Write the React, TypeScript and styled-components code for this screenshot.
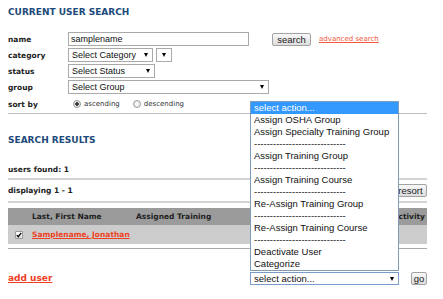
import styled, { createGlobalStyle } from 'styled-components'

const GlobalStyle = createGlobalStyle`
  html, body {
    margin: 0;
    padding: 0;
    background: #ffffff;
  }
  body {
    font-family: 'DejaVu Sans', Verdana, sans-serif;
    color: #222222;
  }
`

const Page = styled.div`
  width: 419px;
  padding: 7px 16px 0 8px;
`
const Title = styled.h2<{ $top?: number }>`
  margin: ${(p) => p.$top || 0}px 0 0 0;
  font: bold 9px/11px 'DejaVu Sans', Verdana, sans-serif;
  color: #1d4a7a;
`
const Form = styled.div`
  display: grid;
  grid-template-columns: 60px 1fr;
  grid-auto-rows: 14px;
  row-gap: 2px;
  margin-top: 14px;
  .sort {
    height: 16px;
  }
`
const Label = styled.div`
  display: flex;
  align-items: center;
  font-size: 7.5px;
  font-weight: bold;
  color: #222;
`
const Row = styled.div`
  display: flex;
  align-items: center;
  gap: 3px;
`
const TextInput = styled.div<{ $w: number }>`
  box-sizing: border-box;
  width: ${(p) => p.$w}px;
  height: 14px;
  border: 1px solid #a9a9a9;
  padding: 0 2px;
  display: flex;
  align-items: center;
  font: 9px 'Liberation Sans', Arial, sans-serif;
  color: #111;
`
const SelectBox = styled.div<{ $w: number; $focus?: boolean; $h?: number }>`
  box-sizing: border-box;
  width: ${(p) => p.$w}px;
  height: ${(p) => p.$h || 14}px;
  border: 1px solid ${(p) => (p.$focus ? '#7b9ccb' : '#a9a9a9')};
  padding: 0 4px 0 3px;
  display: flex;
  align-items: center;
  justify-content: space-between;
  background: #fff;
  font: 9px 'Liberation Sans', Arial, sans-serif;
  color: #111;
  position: relative;
`
const Caret = styled.span`
  width: 0;
  height: 0;
  border-left: 2.5px solid transparent;
  border-right: 2.5px solid transparent;
  border-top: 4px solid #000;
  margin-left: auto;
`
const Button = styled.div<{ $w: number; $h?: number }>`
  box-sizing: border-box;
  width: ${(p) => p.$w}px;
  height: ${(p) => p.$h || 13}px;
  border: 1px solid #a3a3a3;
  border-radius: 2px;
  background: linear-gradient(#f8f8f8, #dddddd);
  display: flex;
  align-items: center;
  justify-content: center;
  font: 9.5px 'Liberation Sans', Arial, sans-serif;
  color: #222;
`
const SmallLink = styled.a`
  font-size: 7px;
  color: #f2553a;
  text-decoration: underline;
  margin-left: 5px;
`
const Radio = styled.span<{ $on?: boolean }>`
  box-sizing: border-box;
  width: 8px;
  height: 8px;
  border-radius: 50%;
  border: 1px solid #9a9a9a;
  background: ${(p) =>
    p.$on ? 'radial-gradient(circle, #333 0 1.5px, #eaeaea 2px)' : 'radial-gradient(circle, #fff, #e0e0e0)'};
`
const RadioText = styled.span`
  font-size: 7px;
  color: #333;
  margin-right: 10px;
`
const Divider = styled.div`
  height: 1px;
  background: #bdbdbd;
  margin-top: 3px;
`
const InfoBar = styled.div<{ $h: number; $top?: number }>`
  height: ${(p) => p.$h}px;
  margin-top: ${(p) => p.$top || 0}px;
  border-bottom: 2px solid #d4d4d4;
  display: flex;
  align-items: center;
  justify-content: space-between;
  font-size: 7.5px;
  font-weight: bold;
  color: #222;
`
const Table = styled.div`
  margin-top: 5px;
  border-bottom: 1px solid #a9a9a9;
  padding-bottom: 4px;
`
const TRow = styled.div<{ $head?: boolean }>`
  display: grid;
  grid-template-columns: 24px 104px 1fr auto;
  align-items: center;
  height: ${(p) => (p.$head ? 17 : 19)}px;
  background: ${(p) => (p.$head ? '#9b9b9b' : '#cccccc')};
  font-size: 7.5px;
  font-weight: bold;
  color: #1e1e1e;
  padding-right: 2px;
`
const Check = styled.span`
  box-sizing: border-box;
  width: 8px;
  height: 8px;
  margin-left: 7px;
  border: 1px solid #999;
  border-radius: 1px;
  background: linear-gradient(#ffffff, #dcdcdc);
  display: flex;
  align-items: center;
  justify-content: center;
`
const NameLink = styled.a`
  color: #f0401f;
  text-decoration: underline;
`
const Bottom = styled.div`
  display: flex;
  align-items: center;
  height: 13px;
  margin-top: 23px;
`
const AddUser = styled.a`
  font: bold 9px/11px 'DejaVu Sans', Verdana, sans-serif;
  color: #f0401f;
  text-decoration: underline;
`
const ActionWrap = styled.div`
  margin-left: auto;
  position: relative;
`
const DropList = styled.div`
  position: absolute;
  left: 0;
  bottom: calc(100% + 1px);
  box-sizing: border-box;
  width: 149px;
  border: 1px solid #7f9db9;
  background: #fff;
  z-index: 5;
`
const Option = styled.div<{ $sel?: boolean }>`
  height: 12px;
  padding-left: 3px;
  font: 9.5px/12px 'Liberation Sans', Arial, sans-serif;
  white-space: nowrap;
  overflow: hidden;
  background: ${(p) => (p.$sel ? '#3399ff' : '#fff')};
  color: ${(p) => (p.$sel ? '#fff' : '#111')};
`

const dash = '-'.repeat(29)
const actions = [
  'select action...',
  'Assign OSHA Group',
  'Assign Specialty Training Group',
  dash,
  'Assign Training Group',
  dash,
  'Assign Training Course',
  dash,
  'Re-Assign Training Group',
  dash,
  'Re-Assign Training Course',
  dash,
  'Deactivate User',
  'Categorize',
]

export default function App() {
  return (
    <Page>
      <GlobalStyle />
      <Title>CURRENT USER SEARCH</Title>
      <Form>
        <Label>name</Label>
        <Row>
          <TextInput $w={181}>samplename</TextInput>
          <Button $w={39} $h={13} style={{ marginLeft: 20 }}>
            search
          </Button>
          <SmallLink>advanced search</SmallLink>
        </Row>
        <Label>category</Label>
        <Row>
          <SelectBox $w={85}>
            Select Category <Caret />
          </SelectBox>
          <SelectBox $w={16}>
            <Caret style={{ marginRight: 1 }} />
          </SelectBox>
        </Row>
        <Label>status</Label>
        <Row>
          <SelectBox $w={87}>
            Select Status <Caret />
          </SelectBox>
        </Row>
        <Label>group</Label>
        <Row>
          <SelectBox $w={201}>
            Select Group <Caret />
          </SelectBox>
        </Row>
        <Label className='sort'>sort by</Label>
        <Row className='sort' style={{ paddingLeft: 5 }}>
          <Radio $on />
          <RadioText>ascending</RadioText>
          <Radio />
          <RadioText>descending</RadioText>
        </Row>
      </Form>
      <Divider />
      <Title $top={21}>SEARCH RESULTS</Title>
      <InfoBar $h={18} $top={14}>
        users found: 1
      </InfoBar>
      <InfoBar $h={21}>
        displaying 1 - 1
        <Button $w={33}>resort</Button>
      </InfoBar>
      <Table>
        <TRow $head>
          <span />
          <span>Last, First Name</span>
          <span>Assigned Training</span>
          <span>activity</span>
        </TRow>
        <TRow>
          <Check>
            <svg width='6' height='6' viewBox='0 0 6 6'>
              <path d='M0.8 3.1 L2.3 4.7 L5.2 0.9' fill='none' stroke='#000' strokeWidth='1.3' />
            </svg>
          </Check>
          <NameLink>Samplename, Jonathan</NameLink>
          <span />
          <span />
        </TRow>
      </Table>
      <Bottom>
        <AddUser>add user</AddUser>
        <ActionWrap>
          <DropList>
            {actions.map((a, i) => (
              <Option key={i} $sel={i === 0}>
                {a}
              </Option>
            ))}
          </DropList>
          <SelectBox $w={149} $h={13} $focus style={{ fontSize: 9.5 }}>
            select action... <Caret />
          </SelectBox>
        </ActionWrap>
        <Button $w={16} $h={13} style={{ marginLeft: 12 }}>
          go
        </Button>
      </Bottom>
    </Page>
  )
}
